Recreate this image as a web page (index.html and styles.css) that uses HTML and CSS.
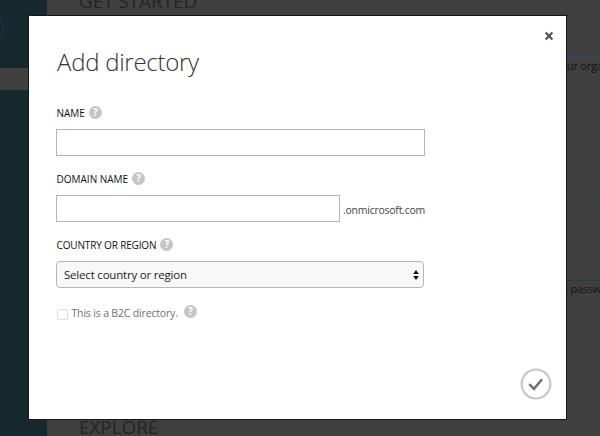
FILE: index.html
```
<!DOCTYPE html>
<html lang="en">
<head>
<meta charset="utf-8">
<title>Add directory</title>
<link rel="stylesheet" href="styles.css">
</head>
<body>
<div class="page">
  <nav class="sidebar">
    <svg class="ring" width="48" height="40" viewBox="0 0 48 40"><circle cx="-17" cy="13" r="20" fill="none" stroke="#1b323a" stroke-width="2"/></svg>
    <div class="selected"></div>
  </nav>
  <main class="content">
    <h2 class="section">GET STARTED</h2>
    <div class="cards">
      <div class="card first"><span>your organization</span></div>
      <div class="card second"></div>
      <div class="card third"><span>the password</span></div>
    </div>
    <h2 class="section explore">EXPLORE</h2>
  </main>
</div>
<div class="dialog">
  <button class="close" aria-label="Close"><svg width="10" height="10" viewBox="0 0 10 10"><path d="M1.6 1.6L8.4 8.4M8.4 1.6L1.6 8.4" stroke="#505050" stroke-width="2.1"/></svg></button>
  <h1 class="title">Add directory</h1>
  <form class="form">
    <div class="field">
      <div class="label"><span class="name">NAME</span><i class="help">?</i></div>
      <div class="input"></div>
    </div>
    <div class="field">
      <div class="label"><span class="domain">DOMAIN NAME</span><i class="help">?</i></div>
      <div class="row"><div class="input short"></div><span class="suffix">.onmicrosoft.com</span></div>
    </div>
    <div class="field">
      <div class="label"><span class="country">COUNTRY OR REGION</span><i class="help">?</i></div>
      <div class="select"><span>Select country or region</span><svg width="6" height="10" viewBox="0 0 6 10"><path d="M3 0L5.8 4H.2zM3 10L5.8 6H.2z" fill="#111"/></svg></div>
    </div>
    <div class="check"><span class="box"></span><span class="text">This is a B2C directory.</span><i class="help">?</i></div>
  </form>
  <button class="submit" aria-label="Complete"><svg width="32" height="32" viewBox="0 0 32 32"><circle cx="16" cy="16" r="14.4" fill="#fff" stroke="#c4c4c4" stroke-width="2"/><path d="M9.3 16.2L14 20.8L22 11.2" fill="none" stroke="#707070" stroke-width="2.5"/></svg></button>
</div>
</body>
</html>
```
FILE: styles.css
```
* { box-sizing: border-box; }
body { margin: 0; width: 600px; height: 436px; overflow: hidden; background: #404040; font-family: "Open Sans", "Noto Sans", sans-serif; }
button { border: 0; padding: 0; background: none; }
svg { display: block; }
.page { display: flex; height: 436px; }
.sidebar { width: 47px; background: #15292f; flex: none; height: 436px; }
.ring { height: 68px; }
.selected { height: 22px; background: #404040; }
.content { flex: 1; padding-left: 32px; overflow: hidden; }
.section { margin: -12px 0 0; height: 26px; line-height: 26px; font-size: 19px; font-weight: 400; color: #242424; letter-spacing: -.1px; white-space: nowrap; }
.cards { margin: 43px 0 0 458px; width: 63px; height: 357px; }
.card { border-top: 1px solid #2a5078; font-size: 11px; line-height: 16px; color: #141414; white-space: nowrap; display: flex; }
.first { height: 137px; }
.first span { margin-left: 18px; letter-spacing: -.2px; }
.second { height: 86px; border-color: #263e5c; }
.third { border-color: #253f4a; }
.third span { margin-left: 15px; letter-spacing: -.3px; }
.explore { margin: 0; }
.dialog { position: absolute; left: 28px; top: 15px; width: 539px; height: 405px; background: #fff; border: 1px solid #161616; padding: 28px 0 0 27px; }
.close { position: absolute; right: 12px; top: 15px; }
.title { margin: 0 0 0 1px; font-size: 24px; line-height: 36px; font-weight: 300; color: #333; letter-spacing: -.27px; }
.form { width: 369px; margin-top: 24px; }
.field { height: 66px; }
.label { display: flex; align-items: center; height: 17px; padding-left: .5px; font-size: 10px; color: #111; white-space: nowrap; }
.country { letter-spacing: -.15px; }
.help { display: block; width: 13px; height: 13px; margin: -1px 0 0 4px; border-radius: 50%; background: #c5c5c5; color: #fff; font: 700 10px/13px "Open Sans", sans-serif; text-align: center; }
.input { width: 369px; height: 27px; margin-top: 8px; border: 1px solid #b5b5b5; background: #fff; }
.row { display: flex; }
.short { width: 284px; flex: none; }
.suffix { margin: 15px 0 0 3px; font-size: 10.5px; line-height: 16px; letter-spacing: -.25px; color: #444; white-space: nowrap; }
.select { display: flex; justify-content: space-between; align-items: center; width: 368px; height: 27px; margin-top: 8px; padding: 0 4px 0 7px; border: 1px solid #b5b5b5; border-radius: 4px; background: #f8f8f8; font-size: 11.5px; letter-spacing: -.2px; color: #222; }
.check { display: flex; align-items: center; height: 20px; margin-top: 1px; padding-left: .5px; font-size: 10.5px; letter-spacing: -.17px; color: #707070; white-space: nowrap; }
.box { width: 11px; height: 11px; margin: 2px 4px 0 0; border: 1px solid #dcdcdc; border-radius: 2px; }
.check .help { margin: -4px 0 0 6px; }
.submit { position: absolute; right: 14px; bottom: 19px; }
```
